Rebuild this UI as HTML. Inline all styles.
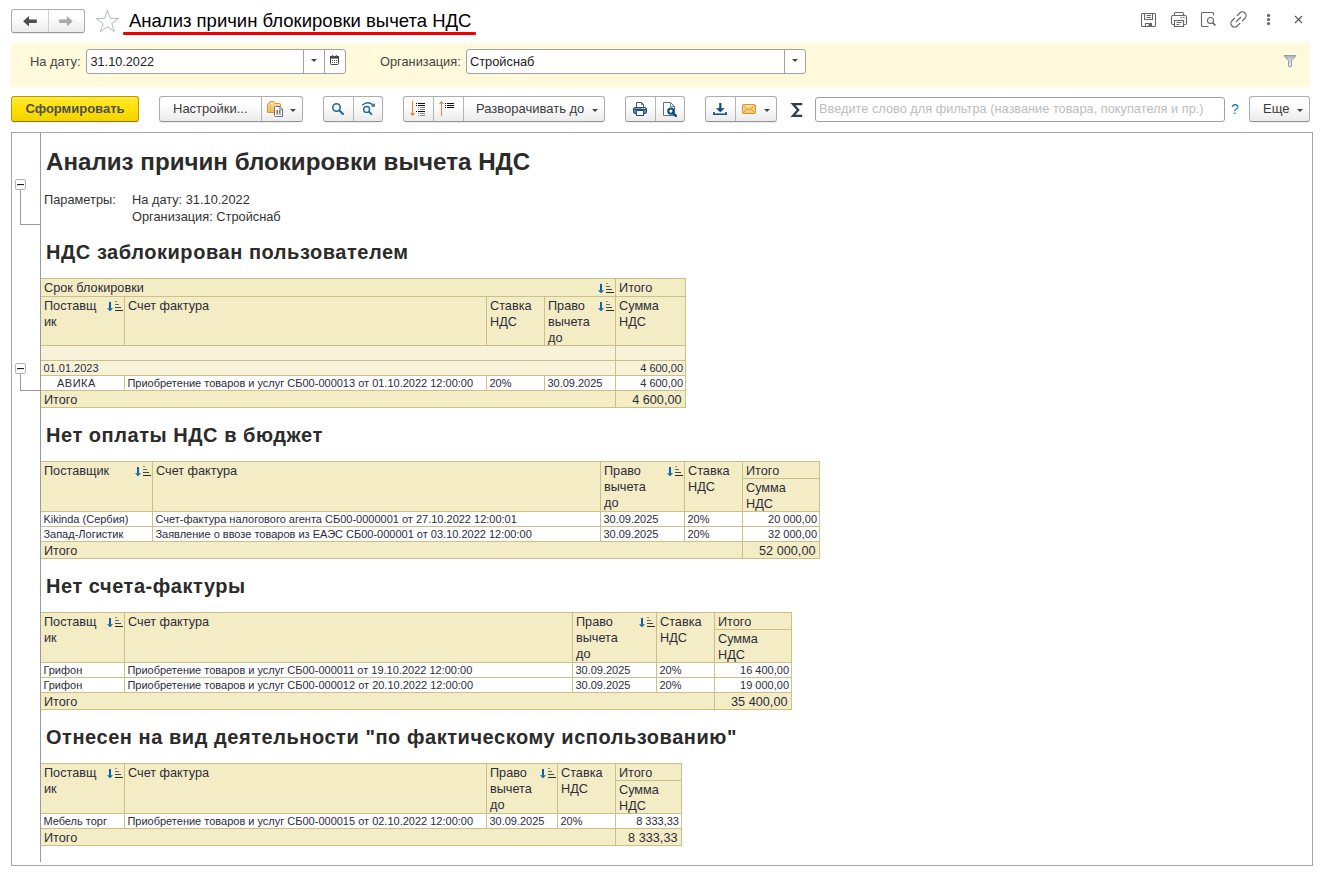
<!DOCTYPE html>
<html lang="ru">
<head>
<meta charset="utf-8">
<title>Анализ причин блокировки вычета НДС</title>
<style>
*{box-sizing:border-box;margin:0;padding:0}
html,body{width:1327px;height:878px;overflow:hidden;background:#fff}
body{font-family:"Liberation Sans",sans-serif;font-size:13px;color:#333;position:relative}
.abs{position:absolute}
/* generic button */
.btn{position:absolute;height:26px;border:1px solid #adadad;border-bottom-color:#969696;border-radius:3px;background:linear-gradient(#ffffff 30%,#ebebeb);box-shadow:0 1px 1px rgba(0,0,0,.08);font-size:13px;color:#3b3b3b;line-height:24px;white-space:nowrap}
.btn .sep{position:absolute;top:0;bottom:0;width:1px;background:#b4b4b4}
.caret{position:absolute;width:0;height:0;border-left:3px solid transparent;border-right:3px solid transparent;border-top:3px solid #444}
.inp{position:absolute;height:25px;border:1px solid #a0a0a0;border-radius:3px;background:#fff;font-size:13px;line-height:22px;color:#222}
/* report */
.rep{position:absolute;left:11px;top:132px;width:1302px;height:734px;border:1px solid #a6a6a6;background:#fff}
.vline{position:absolute;left:40px;top:133px;width:1px;height:729px;background:#9a9a9a;z-index:5}
h1.t{position:absolute;left:46px;font-weight:bold;color:#2b2b2b;white-space:nowrap}
h1.s{font-size:20px;line-height:24px;letter-spacing:.55px}
table.r{position:absolute;border-collapse:collapse;table-layout:fixed;left:40px}
table.r td{border:1px solid #ccc08a;vertical-align:top;padding:0 0 0 3px;overflow:hidden;white-space:nowrap;color:#2c2c3c}
td.h{background:#f4ecc5;font-size:12.700px;line-height:16px;padding-top:1px !important}
td.g{background:#f8f2d8;font-size:11px;line-height:14px;padding-left:2.500px !important}
table.r td.d{background:#fff;font-size:11px;line-height:14px;padding-left:2.400px}
td.n{text-align:right;padding-right:2px !important}
td.h .w{margin-bottom:-3px}
td.tt{background:#f4ecc5;font-size:12.700px;line-height:16px}
.dn{position:relative;top:1px}
td.tt.n{padding-right:3.500px !important}
.si{position:absolute;width:16px;height:11px}
td{position:relative}
.pm{position:absolute;width:11px;height:11px;border:1px solid #b2b2b2;border-radius:2px;background:#fff}
.pm:after{content:"";position:absolute;left:1px;top:4px;width:7px;height:1px;background:#222;box-shadow:0 .5px 0 rgba(0,0,0,.25)}
.gl{position:absolute;background:#9a9a9a}
</style>
</head>
<body>

<!-- ===== header bar ===== -->
<div class="btn" style="left:11px;top:9px;width:74px;height:24px;line-height:22px">
  <div class="sep" style="left:36px;background:#cfcfcf"></div>
  <svg class="abs" style="left:0;top:0" width="72" height="22" viewBox="0 0 72 22"><path d="M11.100 11.300 L17 6 V9.600 H24.800 V13 H17 V16.600 Z" fill="#4d4d4d"/><path d="M60.800 11.300 L54.900 6 V9.600 H47.100 V13 H54.900 V16.600 Z" fill="#a9a9a9"/></svg>
</div>
<svg class="abs" style="left:95px;top:9px" width="26" height="26" viewBox="0 0 26 26"><path d="M12.400 1.200 L15.104 9.379 L23.718 9.423 L16.775 14.521 L19.395 22.727 L12.400 17.700 L5.405 22.727 L8.025 14.521 L1.082 9.423 L9.696 9.379 Z" fill="#fff" stroke="#b3bac2" stroke-width="1" stroke-linejoin="miter"/></svg>
<div class="abs" style="left:129px;top:9px;font-size:18.500px;line-height:24px;color:#000;white-space:nowrap">Анализ причин блокировки вычета НДС</div>
<div class="abs" style="left:123px;top:32px;width:353px;height:3px;background:#f00000;border-radius:1px"></div>

<!-- top-right icons -->
<svg class="abs" style="left:1140px;top:10px" width="170" height="20" viewBox="0 0 170 20" fill="none" stroke="#666" stroke-width="1.1">
  <!-- save -->
  <path d="M2.5 3.5 h12 a1 1 0 0 1 1 1 v11 a1 1 0 0 1 -1 1 h-12 a1 1 0 0 1 -1 -1 v-11 a1 1 0 0 1 1 -1 z"/>
  <path d="M4.5 3.5 v6 h8 v-6 M6.500 5.500 h4.500 M6.500 7.500 h4.500 M5.500 16.500 v-3 h6 v3"/>
  <rect x="8.500" y="13.500" width="3" height="3" fill="#666" stroke="none"/>
  <!-- printer -->
  <path d="M34.500 5.500 v-2 a1 1 0 0 1 1 -1 h7 a1 1 0 0 1 1 1 v2"/>
  <path d="M34.500 14.500 h-1.500 a1.500 1.500 0 0 1 -1.500 -1.500 v-6 a1.500 1.500 0 0 1 1.500 -1.500 h12 a1.500 1.500 0 0 1 1.500 1.500 v6 a1.500 1.500 0 0 1 -1.500 1.500 h-1.500"/>
  <path d="M34.500 10.500 h9 v6 h-9 z M36.500 12.500 h5 M36.500 14.500 h3 M40.500 7.500 h1.500 M43 7.500 h1.500"/>
  <!-- preview -->
  <path d="M68.500 16.500 h-6 a1 1 0 0 1 -1 -1 v-12 a1 1 0 0 1 1 -1 h10 a1 1 0 0 1 1 1 v2"/>
  <circle cx="70.500" cy="10.500" r="3"/>
  <path d="M72.800 12.800 l2.600 2.600" stroke-width="1.700"/>
  <!-- link -->
  <g transform="translate(98.500 9.500) rotate(-45)" stroke-width="1.250" stroke-linecap="round">
    <path d="M-1.800 -3.700 H-5.500 A3.700 3.700 0 0 0 -5.500 3.700 H-1.800"/>
    <path d="M1.800 -3.700 H5.500 A3.700 3.700 0 0 1 5.500 3.700 H1.800"/>
    <path d="M-3.100 0 H3.100"/>
  </g>
  <!-- dots -->
  <g fill="#666" stroke="none"><circle cx="128.500" cy="5.400" r="1.600"/><circle cx="128.500" cy="9.500" r="1.600"/><circle cx="128.500" cy="13.600" r="1.600"/></g>
</svg>
<svg class="abs" style="left:1294px;top:15px" width="9" height="9" viewBox="0 0 9 9"><path d="M1 1 L8 8 M8 1 L1 8" stroke="#555" stroke-width="1.100"/></svg>

<!-- ===== yellow parameter panel ===== -->
<div class="abs" style="left:11px;top:43px;width:1299px;height:44px;background:#fffadc"></div>
<div class="abs" style="left:30px;top:54px;line-height:16px;font-size:12.900px;color:#444">На дату:</div>
<div class="inp" style="left:86px;top:49px;width:260px">
  <span class="abs" style="left:3.500px;top:1px;font-size:12.700px">31.10.2022</span>
  <div class="abs" style="left:216px;top:0;width:1px;height:23px;background:#a3a3a3"></div>
  <div class="caret" style="left:224px;top:9px"></div>
  <div class="abs" style="left:237px;top:0;width:1px;height:23px;background:#a3a3a3"></div>
  <svg class="abs" style="left:243px;top:5px" width="9" height="10" viewBox="0 0 9 10"><rect x="0.500" y="1.500" width="8" height="8" rx="1" fill="#fff" stroke="#444"/><rect x="0" y="1" width="9" height="2.600" fill="#444"/><rect x="2" y="0" width="1.200" height="1.600" fill="#666"/><rect x="5.800" y="0" width="1.200" height="1.600" fill="#666"/><g fill="#555"><rect x="2" y="5" width="1" height="1"/><rect x="4" y="5" width="1" height="1"/><rect x="6" y="5" width="1" height="1"/><rect x="2" y="7" width="1" height="1"/><rect x="4" y="7" width="1" height="1"/><rect x="6" y="7" width="1" height="1"/></g></svg>
</div>
<div class="abs" style="left:380px;top:54px;line-height:16px;font-size:12.800px;color:#444">Организация:</div>
<div class="inp" style="left:466px;top:49px;width:340px">
  <span class="abs" style="left:3px;top:1px;font-size:12.800px">Стройснаб</span>
  <div class="abs" style="left:317px;top:0;width:1px;height:23px;background:#a3a3a3"></div>
  <div class="caret" style="left:324.500px;top:9px"></div>
</div>
<svg class="abs" style="left:1283px;top:55px" width="14" height="13" viewBox="0 0 14 13"><defs><linearGradient id="flt" x1="0" y1="0" x2="0" y2="1"><stop offset="0" stop-color="#aab6c3"/><stop offset=".45" stop-color="#d3dae2"/><stop offset="1" stop-color="#f4f6f9"/></linearGradient></defs><path d="M1 0.600 H13 L8.400 5.600 V11.300 Q7 12.400 5.600 11.300 V5.600 Z" fill="url(#flt)" stroke="#8b98a6" stroke-width="1" stroke-linejoin="round"/></svg>

<!-- ===== toolbar ===== -->
<div class="btn" style="left:11px;top:96px;width:128px;border-color:#b39c00;border-bottom-color:#8f7c00;background:linear-gradient(#ffe83c,#ffe000 50%,#f1d300);font-weight:bold;color:#4a4f59;text-align:center;font-size:13px">Сформировать</div>
<div class="btn" style="left:159px;top:96px;width:144px"><span class="abs" style="left:13px">Настройки...</span><div class="sep" style="left:101px"></div>
  <svg class="abs" style="left:0;top:0" width="142" height="24" viewBox="0 0 142 24">
    <defs><linearGradient id="fg" x1="0" y1="0" x2="0" y2="1"><stop offset="0" stop-color="#fbe3a6"/><stop offset="1" stop-color="#eebc5c"/></linearGradient></defs>
    <path d="M107.500 15.500 V7.500 a1 1 0 0 1 1 -1 h.5 l1 -2 h4 l1 2 h4.500 a1 1 0 0 1 1 1 V15.500 z" fill="url(#fg)" stroke="#d39a33"/>
    <path d="M110.500 7 v8" stroke="#d39a33" stroke-opacity=".45"/>
    <path d="M115.500 9.500 h4.500 l2.500 2.500 v7.500 h-7 a1 1 0 0 1 -1 -1 v-8 a1 1 0 0 1 1 -1 z" fill="#fff" stroke="#5d7290"/>
    <path d="M119.800 9.800 v2.700 h2.700" fill="none" stroke="#5d7290" stroke-width=".8"/>
    <rect x="116.500" y="13" width="1.500" height="3.800" fill="#e23b2e"/><rect x="119" y="13" width="1.500" height="3.800" fill="#3aa03a"/>
    <path d="M116 17.300 h5" stroke="#8a99ad" stroke-width=".7"/>
  </svg>
  <div class="caret" style="left:130px;top:12px"></div></div>
<div class="btn" style="left:323px;top:96px;width:60px"><div class="sep" style="left:29px"></div>
  <svg class="abs" style="left:0;top:0" width="58" height="24" viewBox="0 0 58 24" fill="none" stroke="#1f689e">
    <circle cx="12.500" cy="10.500" r="3.700" stroke-width="1.600"/><path d="M15.400 13.400 L19 16.900" stroke-width="2.100" stroke-linecap="round"/>
    <circle cx="42.600" cy="12.400" r="2.950" stroke-width="1.400"/><path d="M44.900 14.700 L47.400 17.200" stroke-width="1.800" stroke-linecap="round"/>
    <path d="M38.200 8.300 Q43.300 3.600 48.600 7.600" stroke-width="1.400"/><path d="M50.900 5.900 V9.800 L46.600 9.500 Z" fill="#1f689e" stroke="none"/>
  </svg></div>
<div class="btn" style="left:403px;top:96px;width:202px"><div class="sep" style="left:29px"></div><div class="sep" style="left:59px"></div>
  <svg class="abs" style="left:0;top:0" width="62" height="24" viewBox="0 0 62 24" shape-rendering="auto">
    <path d="M8.500 4 V17" stroke="#f08444" stroke-width="1.100"/><path d="M5.900 16 H11.100 L8.500 19.300 Z" fill="#f08444"/>
    <g fill="#111"><rect x="12" y="6" width="1" height="1"/><rect x="14" y="6" width="7" height="1"/><rect x="12" y="8" width="1" height="1"/><rect x="14" y="8" width="7" height="1"/><rect x="12" y="14" width="1" height="1"/><rect x="14" y="14" width="7" height="1"/></g>
    <g fill="#8a8a8a"><rect x="14" y="10" width="1" height="1"/><rect x="16" y="10" width="5" height="1"/><rect x="14" y="12" width="1" height="1"/><rect x="16" y="12" width="5" height="1"/><rect x="14" y="16" width="1" height="1"/><rect x="16" y="16" width="5" height="1"/><rect x="14" y="18" width="1" height="1"/><rect x="16" y="18" width="5" height="1"/></g>
    <path d="M37.500 6 V19" stroke="#f08444" stroke-width="1.100"/><path d="M34.900 6.700 H40.100 L37.500 3.700 Z" fill="#f08444"/>
    <g fill="#111"><rect x="41" y="6" width="1" height="1"/><rect x="43" y="6" width="7" height="1"/><rect x="41" y="8" width="1" height="1"/><rect x="43" y="8" width="7" height="1"/><rect x="41" y="10" width="1" height="1"/><rect x="43" y="10" width="7" height="1"/></g>
  </svg>
  <span class="abs" style="left:72px">Разворачивать до</span><div class="caret" style="left:188px;top:12px"></div></div>
<div class="btn" style="left:625px;top:96px;width:60px"><div class="sep" style="left:29px"></div>
  <svg class="abs" style="left:0;top:0" width="58" height="24" viewBox="0 0 58 24">
    <defs><linearGradient id="pg" x1="0" y1="0" x2="0" y2="1"><stop offset="0" stop-color="#7fa0c8"/><stop offset="1" stop-color="#5a84b6"/></linearGradient></defs>
    <path d="M10.500 10.500 v-5 h5 l2 2 v3 z" fill="#fff" stroke="#3f5f80"/>
    <path d="M15.500 5.500 v2 h2" fill="none" stroke="#3f5f80" stroke-width=".8"/>
    <rect x="7.500" y="10.500" width="13" height="6" rx="1.500" fill="url(#pg)" stroke="#1f4e79"/>
    <path d="M8 12.500 h12" stroke="#1f4e79" stroke-width="1"/>
    <rect x="16" y="11" width="1" height="1" fill="#fff"/><rect x="18" y="11" width="1" height="1" fill="#fff"/>
    <rect x="10.500" y="13.500" width="7" height="5" fill="#fff" stroke="#2b5077"/>
    <path d="M37.500 5.500 h7 l4 4 v9 h-11 z" fill="#fdfdfd" stroke="#54708f"/>
    <path d="M44.500 5.500 v4 h4" fill="none" stroke="#54708f" stroke-width=".8"/>
    <circle cx="44.900" cy="14.100" r="2.650" fill="#fff" stroke="#0f4c7a" stroke-width="2.100"/>
    <path d="M47.300 16.500 L49.900 18.900" stroke="#0f4c7a" stroke-width="2.400" stroke-linecap="round"/>
  </svg></div>
<div class="btn" style="left:705px;top:96px;width:72px"><div class="sep" style="left:29px"></div>
  <svg class="abs" style="left:0;top:0" width="70" height="24" viewBox="0 0 70 24">
    <defs><linearGradient id="mg" x1="0" y1="0" x2="0" y2="1"><stop offset="0" stop-color="#fbe2a2"/><stop offset="1" stop-color="#f3c366"/></linearGradient></defs>
    <path d="M14.300 6 V12" stroke="#0f4c81" stroke-width="2.200"/><path d="M9.800 11.200 H18.800 L14.300 15.200 Z" fill="#0f4c81"/>
    <path d="M7.900 15 v2.300 h12.200 v-2.300" fill="none" stroke="#0f4c81" stroke-width="1.600"/>
    <rect x="36.500" y="7.500" width="13" height="9" rx="1.300" fill="url(#mg)" stroke="#d9952c"/>
    <path d="M37 8 l6 5 l6 -5 M37 16 l4.500 -4.500 M49 16 l-4.500 -4.500" fill="none" stroke="#d9952c" stroke-width=".9"/>
  </svg>
  <div class="caret" style="left:58px;top:12px"></div></div>
<svg class="abs" style="left:788px;top:100px" width="18" height="20" viewBox="0 0 18 20"><path d="M14.200 4.200 H5 L10.200 10 L5 15.800 H14.200" fill="none" stroke="#2c3e50" stroke-width="2.300" stroke-linejoin="miter"/></svg>
<div class="inp" style="left:815px;top:97px;width:410px"><span id="ph" class="abs" style="left:3px;top:0;color:#bdbdbd;font-size:12.790px;white-space:nowrap">Введите слово для фильтра (название товара, покупателя и пр.)</span></div>
<div class="abs" style="left:1231px;top:100px;font-size:14px;line-height:18px;color:#1a6fc0">?</div>
<div class="btn" style="left:1249px;top:96px;width:61px"><span class="abs" style="left:13px">Еще</span><div class="caret" style="left:47px;top:12px"></div></div>

<!-- ===== report area ===== -->
<div class="rep"></div>
<div class="vline"></div>

<div class="pm" style="left:15px;top:179px"></div>
<div class="gl" style="left:20px;top:190px;width:1px;height:35px"></div>
<div class="gl" style="left:20px;top:224px;width:20px;height:1px"></div>
<div class="pm" style="left:15px;top:363px"></div>
<div class="gl" style="left:20px;top:374px;width:1px;height:17px"></div>
<div class="gl" style="left:20px;top:390px;width:20px;height:1px"></div>

<h1 class="t" style="top:148px;font-size:24.150px;line-height:28px">Анализ причин блокировки вычета НДС</h1>
<div class="abs" style="left:44px;top:192px;font-size:12.800px;line-height:16px;color:#333">Параметры:</div>
<div class="abs" style="left:132px;top:192px;font-size:12.800px;line-height:16.500px;color:#333;white-space:nowrap">На дату: 31.10.2022<br>Организация: Стройснаб</div>

<h1 class="t s" style="top:240px">НДС заблокирован пользователем</h1>
<h1 class="t s" style="top:423px">Нет оплаты НДС в бюджет</h1>
<h1 class="t s" style="top:574px">Нет счета-фактуры</h1>
<h1 class="t s" style="top:725px">Отнесен на вид деятельности "по фактическому использованию"</h1>

<!-- TABLES -->
<!--T1--><table class="r" style="top:278px;width:646px"><colgroup><col style="width:84px"><col style="width:362px"><col style="width:58px"><col style="width:71px"><col style="width:70px"></colgroup><tr style="height:18px"><td class="h" colspan="4"><div class="w">Срок блокировки<svg class="si" style="right:1px;top:4px" viewBox="0 0 16 11"><rect x="2" y="1" width="2" height="6.500" fill="#0a62b5"/><path d="M0 7.200 H6 L3 10.200 Z" fill="#0a62b5"/><rect x="8" y="0" width="2" height="1" fill="#8a8a80"/><rect x="8" y="3" width="4" height="1" fill="#66665e"/><rect x="8" y="6" width="6" height="1" fill="#444"/><rect x="8" y="9" width="8" height="1" fill="#2a2a2a"/></svg></div></td><td class="h"><div class="w">Итого</div></td></tr><tr style="height:49px"><td class="h"><div class="w">Поставщ<br>ик<svg class="si" style="right:1px;top:4px" viewBox="0 0 16 11"><rect x="2" y="1" width="2" height="6.500" fill="#0a62b5"/><path d="M0 7.200 H6 L3 10.200 Z" fill="#0a62b5"/><rect x="8" y="0" width="2" height="1" fill="#8a8a80"/><rect x="8" y="3" width="4" height="1" fill="#66665e"/><rect x="8" y="6" width="6" height="1" fill="#444"/><rect x="8" y="9" width="8" height="1" fill="#2a2a2a"/></svg></div></td><td class="h"><div class="w">Счет фактура</div></td><td class="h"><div class="w">Ставка<br>НДС</div></td><td class="h"><div class="w">Право<br>вычета<br>до<svg class="si" style="right:1px;top:4px" viewBox="0 0 16 11"><rect x="2" y="1" width="2" height="6.500" fill="#0a62b5"/><path d="M0 7.200 H6 L3 10.200 Z" fill="#0a62b5"/><rect x="8" y="0" width="2" height="1" fill="#8a8a80"/><rect x="8" y="3" width="4" height="1" fill="#66665e"/><rect x="8" y="6" width="6" height="1" fill="#444"/><rect x="8" y="9" width="8" height="1" fill="#2a2a2a"/></svg></div></td><td class="h"><div class="w">Сумма<br>НДС</div></td></tr><tr style="height:15px"><td class="g" colspan="4"></td><td class="g"></td></tr><tr style="height:15px"><td class="g" colspan="4">01.01.2023</td><td class="g n">4 600,00</td></tr><tr style="height:15px"><td class="d" style="padding-left:16px;letter-spacing:.5px">АВИКА</td><td class="d">Приобретение товаров и услуг СБ00-000013 от 01.10.2022 12:00:00</td><td class="d">20%</td><td class="d">30.09.2025</td><td class="d n">4 600,00</td></tr><tr style="height:17px"><td class="tt" colspan="4"><span class="dn">Итого</span></td><td class="tt n"><span class="dn">4 600,00</span></td></tr></table><!--/T1-->
<!--T2--><table class="r" style="top:461px;width:780px"><colgroup><col style="width:112px"><col style="width:448px"><col style="width:84px"><col style="width:58px"><col style="width:77px"></colgroup><tr style="height:17px"><td class="h" rowspan="2"><div class="w">Поставщик<svg class="si" style="right:1px;top:4px" viewBox="0 0 16 11"><rect x="2" y="1" width="2" height="6.500" fill="#0a62b5"/><path d="M0 7.200 H6 L3 10.200 Z" fill="#0a62b5"/><rect x="8" y="0" width="2" height="1" fill="#8a8a80"/><rect x="8" y="3" width="4" height="1" fill="#66665e"/><rect x="8" y="6" width="6" height="1" fill="#444"/><rect x="8" y="9" width="8" height="1" fill="#2a2a2a"/></svg></div></td><td class="h" rowspan="2"><div class="w">Счет фактура</div></td><td class="h" rowspan="2"><div class="w">Право<br>вычета<br>до<svg class="si" style="right:1px;top:4px" viewBox="0 0 16 11"><rect x="2" y="1" width="2" height="6.500" fill="#0a62b5"/><path d="M0 7.200 H6 L3 10.200 Z" fill="#0a62b5"/><rect x="8" y="0" width="2" height="1" fill="#8a8a80"/><rect x="8" y="3" width="4" height="1" fill="#66665e"/><rect x="8" y="6" width="6" height="1" fill="#444"/><rect x="8" y="9" width="8" height="1" fill="#2a2a2a"/></svg></div></td><td class="h" rowspan="2"><div class="w">Ставка<br>НДС</div></td><td class="h"><div class="w">Итого</div></td></tr><tr style="height:33px"><td class="h"><div class="w">Сумма<br>НДС</div></td></tr><tr style="height:15px"><td class="d">Kikinda (Сербия)</td><td class="d">Счет-фактура налогового агента СБ00-0000001 от 27.10.2022 12:00:01</td><td class="d">30.09.2025</td><td class="d">20%</td><td class="d n">20 000,00</td></tr><tr style="height:15px"><td class="d">Запад-Логистик</td><td class="d">Заявление о ввозе товаров из ЕАЭС СБ00-000001 от 03.10.2022 12:00:00</td><td class="d">30.09.2025</td><td class="d">20%</td><td class="d n">32 000,00</td></tr><tr style="height:17px"><td class="tt" colspan="4"><span class="dn">Итого</span></td><td class="tt n"><span class="dn">52 000,00</span></td></tr></table><!--/T2-->
<!--T3--><table class="r" style="top:612px;width:752px"><colgroup><col style="width:84px"><col style="width:448px"><col style="width:84px"><col style="width:58px"><col style="width:77px"></colgroup><tr style="height:17px"><td class="h" rowspan="2"><div class="w">Поставщ<br>ик<svg class="si" style="right:1px;top:4px" viewBox="0 0 16 11"><rect x="2" y="1" width="2" height="6.500" fill="#0a62b5"/><path d="M0 7.200 H6 L3 10.200 Z" fill="#0a62b5"/><rect x="8" y="0" width="2" height="1" fill="#8a8a80"/><rect x="8" y="3" width="4" height="1" fill="#66665e"/><rect x="8" y="6" width="6" height="1" fill="#444"/><rect x="8" y="9" width="8" height="1" fill="#2a2a2a"/></svg></div></td><td class="h" rowspan="2"><div class="w">Счет фактура</div></td><td class="h" rowspan="2"><div class="w">Право<br>вычета<br>до<svg class="si" style="right:1px;top:4px" viewBox="0 0 16 11"><rect x="2" y="1" width="2" height="6.500" fill="#0a62b5"/><path d="M0 7.200 H6 L3 10.200 Z" fill="#0a62b5"/><rect x="8" y="0" width="2" height="1" fill="#8a8a80"/><rect x="8" y="3" width="4" height="1" fill="#66665e"/><rect x="8" y="6" width="6" height="1" fill="#444"/><rect x="8" y="9" width="8" height="1" fill="#2a2a2a"/></svg></div></td><td class="h" rowspan="2"><div class="w">Ставка<br>НДС</div></td><td class="h"><div class="w">Итого</div></td></tr><tr style="height:33px"><td class="h"><div class="w">Сумма<br>НДС</div></td></tr><tr style="height:15px"><td class="d">Грифон</td><td class="d">Приобретение товаров и услуг СБ00-000011 от 19.10.2022 12:00:00</td><td class="d">30.09.2025</td><td class="d">20%</td><td class="d n">16 400,00</td></tr><tr style="height:15px"><td class="d">Грифон</td><td class="d">Приобретение товаров и услуг СБ00-000012 от 20.10.2022 12:00:00</td><td class="d">30.09.2025</td><td class="d">20%</td><td class="d n">19 000,00</td></tr><tr style="height:17px"><td class="tt" colspan="4"><span class="dn">Итого</span></td><td class="tt n"><span class="dn">35 400,00</span></td></tr></table><!--/T3-->
<!--T4--><table class="r" style="top:763px;width:642px"><colgroup><col style="width:84px"><col style="width:362px"><col style="width:71px"><col style="width:58px"><col style="width:66px"></colgroup><tr style="height:17px"><td class="h" rowspan="2"><div class="w">Поставщ<br>ик<svg class="si" style="right:1px;top:4px" viewBox="0 0 16 11"><rect x="2" y="1" width="2" height="6.500" fill="#0a62b5"/><path d="M0 7.200 H6 L3 10.200 Z" fill="#0a62b5"/><rect x="8" y="0" width="2" height="1" fill="#8a8a80"/><rect x="8" y="3" width="4" height="1" fill="#66665e"/><rect x="8" y="6" width="6" height="1" fill="#444"/><rect x="8" y="9" width="8" height="1" fill="#2a2a2a"/></svg></div></td><td class="h" rowspan="2"><div class="w">Счет фактура</div></td><td class="h" rowspan="2"><div class="w">Право<br>вычета<br>до<svg class="si" style="right:1px;top:4px" viewBox="0 0 16 11"><rect x="2" y="1" width="2" height="6.500" fill="#0a62b5"/><path d="M0 7.200 H6 L3 10.200 Z" fill="#0a62b5"/><rect x="8" y="0" width="2" height="1" fill="#8a8a80"/><rect x="8" y="3" width="4" height="1" fill="#66665e"/><rect x="8" y="6" width="6" height="1" fill="#444"/><rect x="8" y="9" width="8" height="1" fill="#2a2a2a"/></svg></div></td><td class="h" rowspan="2"><div class="w">Ставка<br>НДС</div></td><td class="h"><div class="w">Итого</div></td></tr><tr style="height:33px"><td class="h"><div class="w">Сумма<br>НДС</div></td></tr><tr style="height:15px"><td class="d">Мебель торг</td><td class="d">Приобретение товаров и услуг СБ00-000015 от 02.10.2022 12:00:00</td><td class="d">30.09.2025</td><td class="d">20%</td><td class="d n">8 333,33</td></tr><tr style="height:17px"><td class="tt" colspan="4"><span class="dn">Итого</span></td><td class="tt n"><span class="dn">8 333,33</span></td></tr></table><!--/T4-->

</body>
</html>
